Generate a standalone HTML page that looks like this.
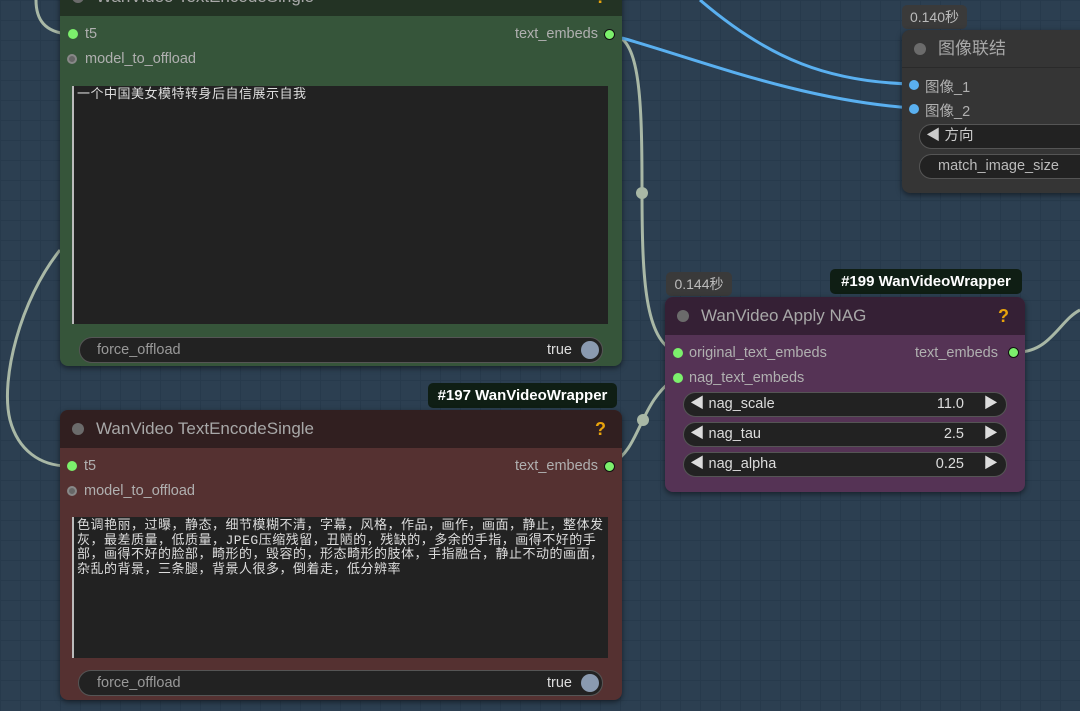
<!DOCTYPE html>
<html><head><meta charset="utf-8"><style>
*{box-sizing:border-box;margin:0;padding:0}
body{width:1080px;height:711px;overflow:hidden;position:relative;font-family:"Liberation Sans","Noto Sans CJK SC",sans-serif;
background-color:#2c3f51;
background-image:linear-gradient(#273a4c 1px,transparent 1px),linear-gradient(90deg,#273a4c 1px,transparent 1px);
background-size:20px 20px;}
.abs{position:absolute}
.node{position:absolute;border-radius:8px;box-shadow:0 2px 6px rgba(0,0,0,.5);overflow:hidden}
.title{position:absolute;left:0;right:0;top:0;height:38px;font-size:17px;color:#a8a8a8;padding-left:36px;line-height:38px}
.dotg{position:absolute;left:12px;top:13px;width:12px;height:12px;border-radius:50%;background:#6b6b6b}
.q{position:absolute;right:16px;top:0;color:#e8a30c;font-size:18px;font-weight:bold}
.lbl{position:absolute;font-size:14.5px;color:#b0b0b0}
.in{position:absolute;width:10px;height:10px;border-radius:50%;background:#7cf06c}
.out{position:absolute;width:11px;height:11px;border-radius:50%;background:#7cf06c;border:1.5px solid #111}
.gin{position:absolute;width:10px;height:10px;border-radius:50%;border:2px solid #888;background:#666}
.ta{position:absolute;background:#222;border-left:2px solid #bbb;color:#ddd;font-size:13px;letter-spacing:0.5px;line-height:14.5px;padding:2px 0 2px 3px;font-family:"WenQuanYi Zen Hei","Liberation Mono",monospace}
.pill{position:absolute;background:#222;border:1px solid #555;border-radius:13px;font-size:14.5px;color:#999}
.tag{position:absolute;background:#0f1e14;color:#fff;font-weight:bold;font-size:15px;border-radius:5px;text-align:center}
.badge{position:absolute;background:#3a3a3a;color:#bbb;font-size:14px;border-radius:5px;text-align:center}
.w{position:absolute;left:18px;right:18px;height:25px;background:#222;border:1px solid #555;border-radius:13px;font-size:14.5px;color:#aaa;line-height:23px}
</style></head><body>
<svg class="abs" style="left:0;top:0" width="1080" height="711">
<g fill="none" stroke="#a9b8a6" stroke-width="3">
<path d="M36 0 C36 20 45 32 68 34"/>
<path d="M60 250 C20 300 0 380 10 420 C18 450 40 466 68 466"/>
<path d="M614 35 C640 40 642 100 642 190 C642 280 645 340 676 352"/>
<path d="M612 463 C640 450 640 400 676 378"/>
<path d="M1018 352 C1050 352 1060 320 1080 310"/>
</g>
<circle cx="642" cy="193" r="6" fill="#a9b8a6"/>
<circle cx="643" cy="420" r="6" fill="#a9b8a6"/>
<g fill="none" stroke="#5ab0f0" stroke-width="3">
<path d="M700 0 C770 60 830 82 912 84"/>
<path d="M622 38 C700 60 800 100 912 108"/>
</g>
</svg>

<div class="node" style="left:60px;top:-22px;width:562px;height:388px;background:#36553a">
<div class="title" style="background:#233324">WanVideo TextEncodeSingle<div class="dotg"></div><div class="q">?</div></div>
</div>
<div class="in" style="left:68px;top:29px"></div><div class="lbl" style="left:85px;top:26px">t5</div>
<div class="out" style="left:604px;top:29px"></div><div class="lbl" style="right:482px;top:26px">text_embeds</div>
<div class="gin" style="left:67px;top:54px"></div><div class="lbl" style="left:85px;top:51px">model_to_offload</div>
<div class="ta" style="left:72px;top:86px;width:536px;height:238px">一个中国美女模特转身后自信展示自我</div>
<div class="pill" style="left:79px;top:337px;width:524px;height:26px"><span class="abs" style="left:17px;top:4px">force_offload</span><span class="abs" style="right:30px;top:4px;color:#ddd">true</span><span class="abs" style="right:3px;top:3px;width:18px;height:18px;border-radius:50%;background:#8a9ab0"></span></div>

<div class="tag" style="left:428px;top:383px;width:189px;height:25px;line-height:25px">#197 WanVideoWrapper</div>
<div class="node" style="left:60px;top:410px;width:562px;height:290px;background:#553131">
<div class="title" style="background:#311f20">WanVideo TextEncodeSingle<div class="dotg"></div><div class="q" style="line-height:38px">?</div></div>
</div>
<div class="in" style="left:67px;top:461px"></div><div class="lbl" style="left:84px;top:458px">t5</div>
<div class="out" style="left:604px;top:461px"></div><div class="lbl" style="right:482px;top:458px">text_embeds</div>
<div class="gin" style="left:67px;top:486px"></div><div class="lbl" style="left:84px;top:483px">model_to_offload</div>
<div class="ta" style="left:72px;top:517px;width:536px;height:141px">色调艳丽，过曝，静态，细节模糊不清，字幕，风格，作品，画作，画面，静止，整体发灰，最差质量，低质量，JPEG压缩残留，丑陋的，残缺的，多余的手指，画得不好的手部，画得不好的脸部，畸形的，毁容的，形态畸形的肢体，手指融合，静止不动的画面，杂乱的背景，三条腿，背景人很多，倒着走，低分辨率</div>
<div class="pill" style="left:78px;top:670px;width:525px;height:26px"><span class="abs" style="left:18px;top:4px">force_offload</span><span class="abs" style="right:30px;top:4px;color:#ddd">true</span><span class="abs" style="right:3px;top:3px;width:18px;height:18px;border-radius:50%;background:#8a9ab0"></span></div>

<div class="badge" style="left:666px;top:272px;width:66px;height:24px;line-height:24px">0.144秒</div>
<div class="tag" style="left:830px;top:269px;width:192px;height:25px;line-height:25px">#199 WanVideoWrapper</div>
<div class="node" style="left:665px;top:297px;width:360px;height:195px;background:#553355">
<div class="title" style="background:#352035">WanVideo Apply NAG<div class="dotg"></div><div class="q" style="line-height:38px">?</div>
</div>
<div class="in" style="left:8px;top:51px"></div><div class="lbl" style="left:24px;top:48px">original_text_embeds</div>
<div class="out" style="left:343px;top:50px"></div><div class="lbl" style="right:27px;top:48px">text_embeds</div>
<div class="in" style="left:8px;top:76px"></div><div class="lbl" style="left:24px;top:73px">nag_text_embeds</div>
<div class="w" style="top:95px"><span class="abs" style="left:6px;color:#ddd">◀ nag_scale</span><span class="abs" style="right:42px;color:#ddd">11.0</span><span class="abs" style="right:8px;color:#ddd">▶</span></div>
<div class="w" style="top:125px"><span class="abs" style="left:6px;color:#ddd">◀ nag_tau</span><span class="abs" style="right:42px;color:#ddd">2.5</span><span class="abs" style="right:8px;color:#ddd">▶</span></div>
<div class="w" style="top:155px"><span class="abs" style="left:6px;color:#ddd">◀ nag_alpha</span><span class="abs" style="right:42px;color:#ddd">0.25</span><span class="abs" style="right:8px;color:#ddd">▶</span></div>
</div>

<div class="badge" style="left:902px;top:5px;width:65px;height:24px;line-height:24px">0.140秒</div>
<div class="node" style="left:902px;top:30px;width:200px;height:163px;background:#353535">
<div class="title" style="background:#353535;border-bottom:1px solid #2a2a2a">图像联结<div class="dotg"></div></div>
<div class="in" style="left:7px;top:50px;background:#5ab0f0"></div><div class="lbl" style="left:23px;top:46px">图像_1</div>
<div class="in" style="left:7px;top:74px;background:#5ab0f0"></div><div class="lbl" style="left:23px;top:70px">图像_2</div>
<div class="w" style="left:17px;right:-20px;top:94px;color:#ccc"><span class="abs" style="left:6px">◀ 方向</span></div>
<div class="w" style="left:17px;right:-20px;top:124px;color:#bbb"><span class="abs" style="left:18px">match_image_size</span></div>
</div>
</body></html>
